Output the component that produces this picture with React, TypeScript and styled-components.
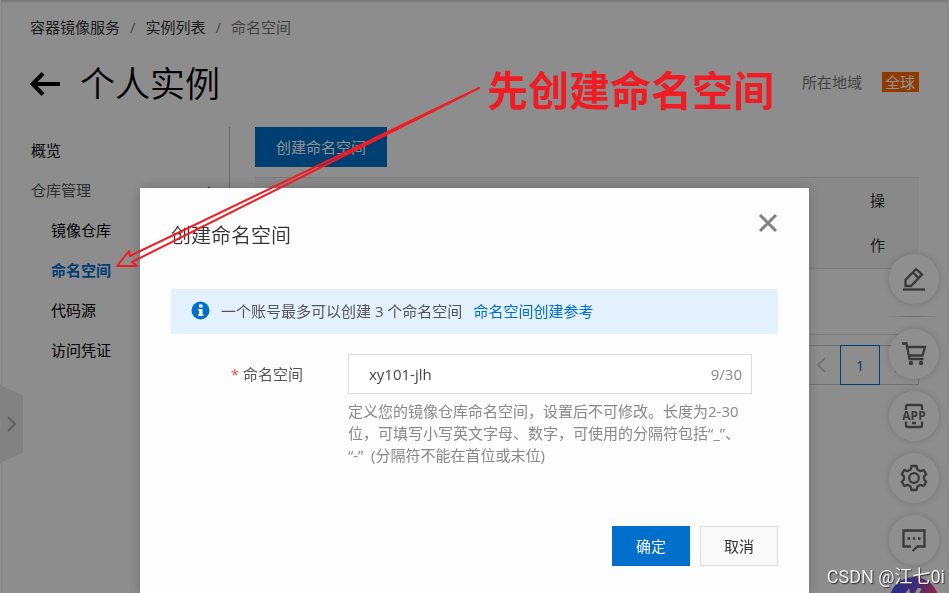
import React, { useState } from "react";
import styled, { createGlobalStyle, css } from "styled-components";

const GlobalStyle = createGlobalStyle`
  *, *::before, *::after { box-sizing: border-box; }
  body {
    margin: 0;
    background: #fff;
    color: #333;
    font-family: "Open Sans", "Noto Sans CJK SC", sans-serif;
    font-size: 15px;
    line-height: 20px;
  }
  button, input { font: inherit; color: inherit; }
  a { color: inherit; text-decoration: none; }
`;

const Page = styled.div`
  isolation: isolate;
  min-height: 100vh;
  padding: 17px 29px 0;
  border: 0 solid #fff;
  border-width: 0 1px;
  background: #fcfcfc;
  box-shadow: inset 0 2px 2px rgba(0, 0, 0, 0.15);
`;

const Breadcrumb = styled.nav`
  display: flex;
  gap: 10px;
  color: #777;
  a { color: #333; }
`;

const Header = styled.header`
  display: flex;
  align-items: center;
  height: 50px;
  margin-top: 20px;
`;

const BackLink = styled.a`
  display: flex;
  width: 50px;
  padding-top: 4px;
  color: #000;
`;

const Title = styled.h1`
  flex: 1;
  margin: 0;
  padding-top: 4px;
  color: #000;
  font-size: 35px;
  line-height: 50px;
  font-weight: 350;
`;

const RegionLabel = styled.span`
  margin-right: 20px;
  color: #777;
`;

const RegionTag = styled.span`
  padding: 0 4px 0 3px;
  background: #ff6a00;
  color: #fff;
`;

const Body = styled.div`
  display: flex;
  margin-top: 20px;
`;

const Sidebar = styled.nav`
  width: 200px;
  height: 320px;
  flex: none;
  border-right: 1px solid #bbb;
`;

const NavItem = styled.a<{ $nested?: boolean; $active?: boolean; $muted?: boolean }>`
  display: flex;
  justify-content: space-between;
  align-items: center;
  height: 40px;
  padding: 6px 14px 0 ${(p) => (p.$nested ? 21 : 1)}px;
  color: ${(p) => (p.$active ? "#0070cc" : p.$muted ? "#555" : "#000")};
  font-weight: ${(p) => (p.$active ? 700 : 400)};
`;

const Main = styled.main`
  flex: 1;
  min-width: 0;
  padding-left: 25px;
`;

const Button = styled.button<{ $primary?: boolean; $wide?: boolean }>`
  height: 40px;
  padding: 0 ${(p) => (p.$wide ? 20 : 23)}px;
  border: 1px solid ${(p) => (p.$primary ? "#0070cc" : "#ddd")};
  background: ${(p) => (p.$primary ? "#0070cc" : "#f9f9f9")};
  color: ${(p) => (p.$primary ? "#fff" : "#333")};
  cursor: pointer;
`;

const Table = styled.table`
  width: 100%;
  margin-top: 10px;
  border-collapse: collapse;
  border-top: 1px solid #ddd;
  th {
    height: 90px;
    padding: 0;
    background: #f5f5f5;
    font-weight: 400;
    line-height: 45px;
    text-align: left;
    color: #333;
  }
  td {
    height: 66px;
    border-top: 1px solid #ddd;
    border-bottom: 1px solid #ddd;
  }
`;

const ActionCell = styled.th`
  width: 49px;
`;

const Pagination = styled.div`
  display: flex;
  justify-content: flex-end;
  height: 40px;
  margin-top: 10px;
`;

const PageButton = styled.button<{ $current?: boolean }>`
  position: relative;
  z-index: ${(p) => (p.$current ? 1 : 0)};
  display: flex;
  align-items: center;
  justify-content: center;
  width: 40px;
  margin-left: -1px;
  padding: 0;
  border: 1px solid ${(p) => (p.$current ? "#0070cc" : "#ccc")};
  background: transparent;
  color: ${(p) => (p.$current ? "#0070cc" : "#ccc")};
`;

const DrawerHandle = styled.button`
  position: fixed;
  left: 0;
  top: 385px;
  display: flex;
  align-items: center;
  width: 23px;
  height: 78px;
  padding: 0 0 0 6px;
  border: 0;
  background: #e6e6e6;
  color: #aaa;
  clip-path: polygon(0 0, 100% 13%, 100% 87%, 0 100%);
`;

const Tools = styled.aside`
  position: fixed;
  top: 254px;
  right: 10px;
  display: flex;
  flex-direction: column;
  align-items: center;
  gap: 12px;
  width: 50px;
`;

const round = css`
  display: flex;
  flex: none;
  align-items: center;
  justify-content: center;
  width: 50px;
  height: 50px;
  padding: 0;
  border: 0;
  border-radius: 50%;
`;

const ToolButton = styled.button`
  ${round}
  background: #fff;
  color: #666;
  box-shadow: 0 0 8px rgba(0, 0, 0, 0.18);
`;

const ToolDivider = styled.hr`
  width: 50px;
  height: 1px;
  margin: 0;
  border: 0;
  background: linear-gradient(90deg, transparent, #bbb, transparent);
`;

const AssistantButton = styled.button`
  ${round}
  background: linear-gradient(110deg, #3c50f0 10%, #7a4ed0 45%, #f04880 75%);
  color: #fff;
`;

const Overlay = styled.div`
  position: fixed;
  inset: 0;
  display: flex;
  justify-content: center;
  align-items: flex-start;
  padding: 188px 140px 0;
  overflow: hidden;
  background: rgba(0, 0, 0, 0.44);
`;

const Dialog = styled.section`
  flex: 1;
  padding: 0 31px 31px;
  background: #fdfdfd;
  box-shadow: 0 0 12px rgba(0, 0, 0, 0.22);
`;

const DialogHeader = styled.header`
  display: flex;
  align-items: center;
  justify-content: space-between;
  height: 70px;
  padding-top: 25px;
  h2 {
    margin: 0;
    font-size: 20px;
    line-height: 28px;
    font-weight: 350;
  }
`;

const CloseButton = styled.button`
  display: flex;
  align-self: flex-start;
  padding: 0;
  border: 0;
  background: none;
  color: #808080;
`;

const Notice = styled.p`
  display: flex;
  align-items: center;
  gap: 11px;
  height: 45px;
  margin: 31px 0 20px;
  padding: 0 20px 2px;
  background: #e3f0fd;
  color: #555;
  svg { flex: none; }
  a { color: #0070cc; }
`;

const Field = styled.div`
  display: grid;
  grid-template-columns: 132px 1fr;
  column-gap: 45px;
  padding-right: 26px;
`;

const FieldLabel = styled.label`
  color: #555;
  line-height: 40px;
  text-align: right;
  &::before {
    content: "*";
    margin-right: 4px;
    color: #e04a40;
  }
`;

const InputBox = styled.div`
  display: flex;
  align-items: center;
  height: 40px;
  padding: 0 9px 0 20px;
  border: 1px solid #ddd;
  background: #fff;
  color: #888;
`;

const TextInput = styled.input`
  flex: 1;
  min-width: 0;
  padding: 0;
  border: 0;
  outline: 0;
  background: none;
  color: #444;
`;

const Hint = styled.p`
  grid-column: 2;
  margin: 6px 0 0;
  color: #888;
  line-height: 22px;
`;

const DialogFooter = styled.footer`
  display: flex;
  justify-content: flex-end;
  gap: 10px;
  margin-top: 60px;
`;

const Annotation = styled.div`
  position: fixed;
  top: 60px;
  left: 487px;
  color: #f01c24;
  font-size: 41px;
  line-height: 60px;
  font-weight: 700;
  white-space: nowrap;
`;

const ArrowDrawing = styled.svg`
  position: fixed;
  top: 0;
  left: 0;
  pointer-events: none;
`;

const Watermark = styled.div`
  position: fixed;
  right: 4px;
  bottom: 4px;
  color: #eee;
  font-family: Roboto, "Noto Sans CJK SC", sans-serif;
  font-size: 18px;
  line-height: 24px;
  text-shadow: 1px 1px 1px #333;
`;

const Chevron = ({ left }: { left?: boolean }) => (
  <svg width="12" height="18" viewBox="0 0 12 18" fill="none" stroke="currentColor" strokeWidth="2">
    <path d={left ? "M10 2 3 9l7 7" : "M2 2l7 7-7 7"} />
  </svg>
);

const tools = [
  {
    label: "编辑",
    icon: (
      <>
        <path d="M3.500 20v-6L14 3l6 5.500L9 20z M11 6.500l5.500 5.500" />
        <path d="M1 23.500h22" />
      </>
    ),
  },
  {
    label: "购物车",
    icon: (
      <>
        <path d="M0 2.500h4.500l3 15.500h14M5 6h18l-2.500 8.500H7" />
        <circle cx="9" cy="22" r="2.200" fill="currentColor" stroke="none" />
        <circle cx="19" cy="22" r="2.200" fill="currentColor" stroke="none" />
      </>
    ),
  },
  {
    label: "APP",
    icon: (
      <>
        <path d="M4 7V3.500q0-1.500 1.500-1.500h13q1.500 0 1.500 1.500V7M4 18.500v4q0 1.500 1.500 1.500h13q1.500 0 1.500-1.500v-4M10 20h4" />
        <text x="12" y="17" textAnchor="middle" fontSize="12" fontWeight="700" fill="currentColor" stroke="none">APP</text>
      </>
    ),
  },
  {
    label: "设置",
    icon: (
      <>
        <path d="M9.500 1h5l1 3.500 3 1.700 3.200-1.200 2.500 4.200-2.200 2.300v3l2.200 2.300-2.500 4.200-3.200-1.200-3 1.700-1 3.500h-5l-1-3.500-3-1.700-3.200 1.200-2.500-4.200L2 14.500v-3L-.2 9.200 2.300 5l3.200 1.200 3-1.700z" strokeLinejoin="round" />
        <circle cx="12" cy="13" r="4.800" />
      </>
    ),
  },
  {
    label: "反馈",
    icon: (
      <>
        <path d="M9 19.500H1.500V3.500h21v16h-7L10.500 24" />
        <path d="M5.500 11.500h2.500M10.800 11.500h2.500M16 11.500h2.500" />
      </>
    ),
  },
];

const ToolIcon = ({ children }: { children: React.ReactNode }) => (
  <svg width="28" height="28" viewBox="-2 -1 28 28" fill="none" stroke="currentColor" strokeWidth="2.300">
    {children}
  </svg>
);

export default function App() {
  const [name, setName] = useState("xy101-jlh");
  return (
    <>
      <GlobalStyle />
      <Page>
        <Breadcrumb aria-label="面包屑">
          <a href="#registry">容器镜像服务</a>
          <span>/</span>
          <a href="#instances">实例列表</a>
          <span>/</span>
          <span>命名空间</span>
        </Breadcrumb>
        <Header>
          <BackLink href="#back" aria-label="返回">
            <svg width="32" height="26" viewBox="0 0 32 26" fill="none" stroke="currentColor" strokeWidth="4">
              <path d="M30 13H3M13 2.500 2.500 13 13 23.500" />
            </svg>
          </BackLink>
          <Title>个人实例</Title>
          <RegionLabel>所在地域</RegionLabel>
          <RegionTag>全球</RegionTag>
        </Header>
        <Body>
          <Sidebar aria-label="实例导航">
            <NavItem href="#overview">概览</NavItem>
            <NavItem href="#management" $muted>
              仓库管理
              <svg width="12" height="8" viewBox="0 0 12 8" fill="none" stroke="currentColor" strokeWidth="2">
                <path d="M1 7l5-5 5 5" />
              </svg>
            </NavItem>
            <NavItem href="#repositories" $nested>镜像仓库</NavItem>
            <NavItem href="#namespaces" $nested $active>命名空间</NavItem>
            <NavItem href="#source" $nested>代码源</NavItem>
            <NavItem href="#credentials" $nested>访问凭证</NavItem>
          </Sidebar>
          <Main>
            <Button $primary $wide>创建命名空间</Button>
            <Table>
              <thead>
                <tr>
                  <th />
                  <ActionCell>操<br />作</ActionCell>
                </tr>
              </thead>
              <tbody>
                <tr><td /><td /></tr>
              </tbody>
            </Table>
            <Pagination>
              <PageButton aria-label="上一页"><Chevron left /></PageButton>
              <PageButton $current>1</PageButton>
              <PageButton aria-label="下一页"><Chevron /></PageButton>
            </Pagination>
          </Main>
        </Body>
      </Page>
      <DrawerHandle aria-label="展开"><Chevron /></DrawerHandle>
      <Tools>
        {tools.map((tool, i) => (
          <React.Fragment key={tool.label}>
            <ToolButton aria-label={tool.label}><ToolIcon>{tool.icon}</ToolIcon></ToolButton>
            {i === 0 && <ToolDivider />}
          </React.Fragment>
        ))}
        <AssistantButton aria-label="助手">
          <svg width="28" height="28" viewBox="0 0 28 28" fill="none" stroke="currentColor" strokeWidth="4">
            <path d="M4 10l4-5 2 12L20 0" />
          </svg>
        </AssistantButton>
      </Tools>
      <Overlay>
        <Dialog role="dialog" aria-labelledby="dialog-title">
          <DialogHeader>
            <h2 id="dialog-title">创建命名空间</h2>
            <CloseButton aria-label="关闭">
              <svg width="20" height="20" viewBox="0 0 20 20" fill="none" stroke="currentColor" strokeWidth="3">
                <path d="M2 2l16 16M18 2 2 18" />
              </svg>
            </CloseButton>
          </DialogHeader>
          <Notice>
            <svg width="19" height="19" viewBox="0 0 19 19">
              <circle cx="9.500" cy="9.500" r="9" fill="#0070cc" />
              <path d="M8 3.500h3.500v3H8zM7 8h4.500v5.500h1V15H7v-1.500h1V9.500H7z" fill="#fff" />
            </svg>
            <span>一个账号最多可以创建 3 个命名空间</span>
            <a href="#reference">命名空间创建参考</a>
          </Notice>
          <Field>
            <FieldLabel htmlFor="namespace">命名空间</FieldLabel>
            <InputBox>
              <TextInput id="namespace" value={name} maxLength={30} onChange={(e) => setName(e.target.value)} />
              <span>{name.length}/30</span>
            </InputBox>
            <Hint>
              定义您的镜像仓库命名空间，设置后不可修改。长度为2-30位，可填写小写英文字母、数字，可使用的分隔符包括“_”、<wbr />“-”&nbsp; (分隔符不能在首位或末位)
            </Hint>
          </Field>
          <DialogFooter>
            <Button $primary>确定</Button>
            <Button>取消</Button>
          </DialogFooter>
        </Dialog>
      </Overlay>
      <Annotation>先创建命名空间</Annotation>
      <ArrowDrawing width="500" height="280" viewBox="0 0 500 280" fill="none" stroke="#f01c24" strokeWidth="2">
        <path d="M479 88 130 256l-1-5-12 15h20l-5-4z" strokeLinejoin="round" />
      </ArrowDrawing>
      <Watermark>CSDN @江七0i</Watermark>
    </>
  );
}
